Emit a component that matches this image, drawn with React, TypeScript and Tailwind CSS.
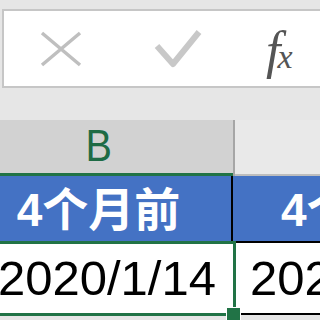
import React from 'react';

const green = 'border-[#217346]';

export default function App() {
  return (
    <div className="relative w-[320px] h-[320px] overflow-hidden bg-[#e6e6e6] font-['Liberation_Sans','Noto_Sans_CJK_SC',sans-serif]">
      {/* formula bar */}
      <div className="pt-[9px] pl-[2px] h-[120px]">
        <div className="flex items-center h-[79px] w-[330px] bg-white border-2 border-[#c6c6c6]">
          <svg className="ml-[36px] shrink-0" width="42" height="36" viewBox="0 0 42 36">
            <path d="M2 2 L40 34 M40 2 L2 34" stroke="#bfbfbf" strokeWidth="3.5" fill="none" />
          </svg>
          <svg className="ml-[72px] shrink-0" width="48" height="40" viewBox="0 0 48 40">
            <path d="M3 17 L19 35 L45 3" stroke="#c8c8c8" strokeWidth="6" fill="none" strokeLinejoin="round" />
          </svg>
          <div className="ml-[64px] flex items-baseline text-[#555555] italic font-['Liberation_Serif',serif] leading-none pt-[4px]">
            <span className="text-[52px]">f</span>
            <span className="text-[34px] -ml-[3px]">x</span>
          </div>
        </div>
      </div>

      {/* column header */}
      <div className="flex h-[56px]">
        <div className={`w-[233px] shrink-0 bg-[#d2d2d2] border-b-[3px] ${green} flex items-center justify-center pr-[36px]`}>
          <span className="text-[44px] leading-none text-[#1e6b45] pb-[2px] scale-x-90">B</span>
        </div>
        <div className="w-[2px] bg-[#a6a6a6]" />
        <div className="flex-1 bg-[#e9e9e9] border-b-2 border-[#bdbdbd]" />
      </div>

      {/* blue title row */}
      <div className="flex h-[65px] bg-[#4472c4]">
        <div className="w-[233px] shrink-0 border-r-2 border-black flex items-center justify-center text-white font-bold text-[46px] leading-none pr-[34px] pt-[2px] whitespace-nowrap">
          4个月前
        </div>
        <div className="flex-1 flex items-center pl-[48px] text-white font-bold text-[46px] leading-none pt-[2px] whitespace-nowrap">
          4个月前
        </div>
      </div>

      {/* date row */}
      <div className="flex h-[72px] bg-white">
        <div className="w-[236px] shrink-0 flex items-center justify-end pr-[20px] text-black text-[49px] leading-none whitespace-nowrap pt-[3px]">
          2020/1/14
        </div>
        <div className="flex-1 border-t-2 border-black flex items-center pl-[14px] text-black text-[49px] leading-none whitespace-nowrap pt-[1px]">
          2020/1/14
        </div>
      </div>

      {/* selection outline */}
      <div className={`absolute left-[-4px] top-[241px] w-[240px] h-[75px] border-[3px] ${green}`} />
      <div className="absolute left-[236px] top-[313px] w-[90px] h-[2px] bg-black" />
      <div className="absolute left-[226px] top-[307px] w-[15px] h-[14px] bg-[#217346] border border-white" />
    </div>
  );
}
